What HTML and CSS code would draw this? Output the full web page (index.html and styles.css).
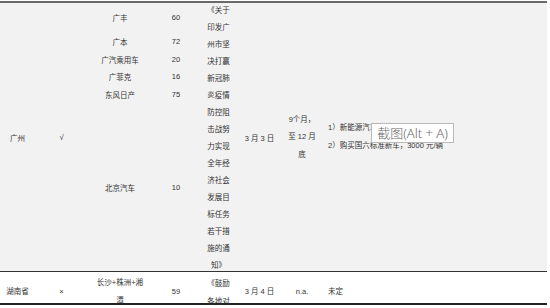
FILE: index.html
```html
<!DOCTYPE html>
<html lang="zh-CN">
<head>
<meta charset="utf-8">
<link rel="stylesheet" href="styles.css">
</head>
<body>
<div class="sheet">
  <div class="grid gz">
    <div class="cell span col1">广州</div>
    <div class="cell span col2">√</div>
    <div class="cell c3">广丰</div><div class="cell c4">60</div>
    <div class="cell c3">广本</div><div class="cell c4">72</div>
    <div class="cell c3">广汽乘用车</div><div class="cell c4">20</div>
    <div class="cell c3">广菲克</div><div class="cell c4">16</div>
    <div class="cell c3">东风日产</div><div class="cell c4">75</div>
    <div class="cell c3">北京汽车</div><div class="cell c4">10</div>
    <div class="span col5 longtext">《关于印发广州市坚决打赢新冠肺炎疫情防控阻击战努力实现全年经济社会发展目标任务若干措施的通知》</div>
    <div class="cell span col6">3 月 3 日</div>
    <div class="cell span col7 period">9个月，至 12 月底</div>
    <div class="cell span col8 notes">
      <div class="notes-text">1）新能源汽车补贴<br>2）购买国六标准新车，3000 元/辆</div>
      <div class="tip">截图(Alt + A)</div>
    </div>
    <div class="cell span col9"></div>
  </div>
  <div class="grid hn">
    <div class="cell">湖南省</div>
    <div class="cell">×</div>
    <div class="cell narrow">长沙+株洲+湘潭</div>
    <div class="cell">59</div>
    <div class="cell narrow5">《鼓励各地对</div>
    <div class="cell">3 月 4 日</div>
    <div class="cell">n.a.</div>
    <div class="cell left">未定</div>
    <div class="cell"></div>
  </div>
</div>
</body>
</html>
```

FILE: styles.css
```css
html, body {
  margin: 0;
  padding: 0;
  background: #fff;
}

body {
  font-family: "Liberation Sans", "Noto Sans CJK SC", sans-serif;
  font-size: 7.5px;
  color: #333;
}

.sheet {
  width: 547px;
  margin-top: 1px;
  border-top: 2px solid #6a6a6a;
}

.grid {
  display: grid;
  grid-template-columns: 35px 53px 64px 48px 37px 45px 40px 170px 55px;
}

.gz {
  background: #f2f2f2;
  height: 268px;
  grid-template-rows: 28px 20px 17px 17.5px 17.5px 168px;
  border-bottom: 1px solid #333;
}

.cell {
  display: flex;
  align-items: center;
  justify-content: center;
  text-align: center;
  min-width: 0;
}

.span { grid-row: 1 / -1; }
.col1 { grid-column: 1; }
.col2 { grid-column: 2; }
.c3 { grid-column: 3; }
.c4 { grid-column: 4; }
.col5 { grid-column: 5; }
.col6 { grid-column: 6; }
.col7 { grid-column: 7; }
.col8 { grid-column: 8; }
.col9 { grid-column: 9; }

.longtext {
  align-self: start;
  margin-top: -2px;
  padding: 0 7px;
  line-height: 17px;
  text-align: center;
  font-family: "Noto Sans CJK SC", sans-serif;
}

.period {
  padding: 0 5px;
  line-height: 17.5px;
}

.notes {
  justify-content: flex-start;
  text-align: left;
  padding-left: 6px;
  line-height: 18px;
  position: relative;
}

.tip {
  position: absolute;
  left: 49px;
  top: 120px;
  width: 81px;
  height: 18px;
  border: 1px solid #b8b8b8;
  background: #fff;
  color: #6a6a6a;
  font-family: "Noto Sans", "Noto Sans CJK SC", sans-serif;
  font-size: 13px;
  font-weight: 300;
  line-height: 18px;
  text-align: center;
  white-space: nowrap;
}

.hn {
  height: 31px;
  border-bottom: 2px solid #222;
  line-height: 17.5px;
  background: #fff;
}

.hn .cell {
  padding-top: 2px;
}

.hn .narrow {
  padding-left: 6px;
  padding-right: 6px;
}

.hn .narrow5 {
  padding-left: 7px;
  padding-right: 7px;
  font-family: "Noto Sans CJK SC", sans-serif;
}

.hn .left {
  justify-content: flex-start;
  padding-left: 6px;
}
```
